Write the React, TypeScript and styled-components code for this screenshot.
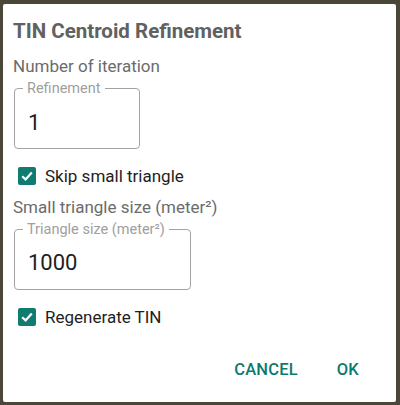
import React from "react";
import styled, { createGlobalStyle } from "styled-components";

const GlobalStyle = createGlobalStyle`
  html, body {
    margin: 0;
    padding: 0;
    background: #4a4738;
  }
  body {
    font-family: Roboto, "Noto Sans", sans-serif;
  }
`;

const Backdrop = styled.div`
  width: 400px;
  height: 405px;
  box-sizing: border-box;
  padding: 4px 4px 3px 3px;
`;

const Dialog = styled.div`
  height: 100%;
  background: #ffffff;
  border-radius: 2px;
  box-sizing: border-box;
  padding: 15px 10px 0 10px;
  display: flex;
  flex-direction: column;
`;

const Title = styled.h2`
  margin: 0;
  font-size: 20.5px;
  font-weight: 700;
  color: #616161;
  line-height: 24px;
`;

const Caption = styled.div<{ $top: number }>`
  margin-top: ${({ $top }) => $top}px;
  font-size: 17px;
  color: #6b6b6b;
  line-height: 20px;
`;

const Field = styled.fieldset<{ $width: number }>`
  margin: 4px 0 0 1px;
  width: ${({ $width }) => $width}px;
  height: 69px;
  box-sizing: border-box;
  border: 1px solid #a3a3a3;
  border-radius: 4px;
  padding: 0 13px;
`;

const Legend = styled.legend`
  margin-left: -5px;
  padding: 0 4px;
  font-size: 14.5px;
  color: #a0a0a0;
  line-height: 16px;
  position: relative;
  top: 1px;
`;

const Value = styled.div<{ $top: number }>`
  font-size: 22px;
  color: #1e1e1e;
  line-height: 26px;
  margin-top: ${({ $top }) => $top}px;
`;

const CheckRow = styled.label`
  display: flex;
  align-items: center;
  gap: 9px;
  margin-top: 17px;
  margin-left: 5px;
  font-size: 17px;
  color: #1e1e1e;
  line-height: 20px;
`;

const Box = styled.span`
  width: 18px;
  height: 18px;
  border-radius: 2px;
  background: #107c70;
  display: flex;
  align-items: center;
  justify-content: center;
`;

const Actions = styled.div`
  margin-top: auto;
  display: flex;
  justify-content: flex-end;
  gap: 39px;
  padding: 0 27px 22px 0;
`;

const Action = styled.button`
  border: none;
  background: none;
  padding: 0;
  font-family: Roboto, sans-serif;
  font-size: 16.5px;
  line-height: 20px;
  font-weight: 500;
  color: #0d7a6e;
  letter-spacing: 0.2px;
`;

const Check = () => (
  <Box>
    <svg width="14" height="14" viewBox="0 0 14 14">
      <path d="M2.2 7.2 L5.6 10.4 L11.8 3.6" fill="none" stroke="#fff" strokeWidth="2.2" />
    </svg>
  </Box>
);

export default function App() {
  return (
    <>
      <GlobalStyle />
      <Backdrop>
        <Dialog>
          <Title>TIN Centroid Refinement</Title>
          <Caption $top={13}>Number of iteration</Caption>
          <Field $width={126}>
            <Legend>Refinement</Legend>
            <Value $top={14}>1</Value>
          </Field>
          <CheckRow>
            <Check />
            Skip small triangle
          </CheckRow>
          <Caption $top={11}>Small triangle size (meter²)</Caption>
          <Field $width={177}>
            <Legend>Triangle size (meter²)</Legend>
            <Value $top={13}>1000</Value>
          </Field>
          <CheckRow>
            <Check />
            Regenerate TIN
          </CheckRow>
          <Actions>
            <Action>CANCEL</Action>
            <Action>OK</Action>
          </Actions>
        </Dialog>
      </Backdrop>
    </>
  );
}
